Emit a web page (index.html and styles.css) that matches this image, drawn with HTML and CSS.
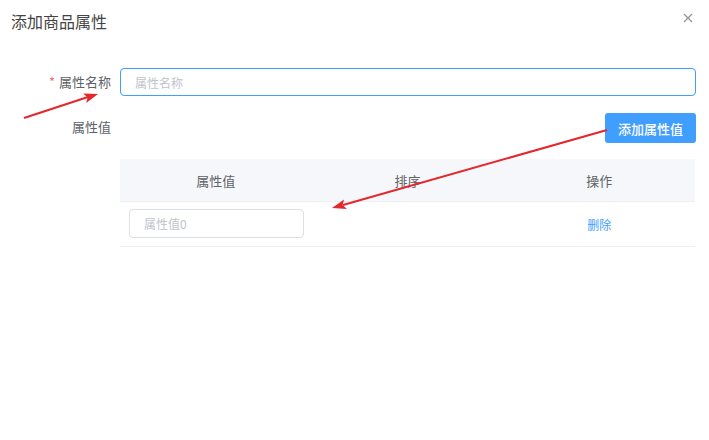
FILE: index.html
```html
<!DOCTYPE html>
<html>
<head>
  <title>添加商品属性</title>
  <link rel="stylesheet" href="styles.css">
</head>
<body>

  <div class="dialog">
    <div class="dialog-header">
      <span class="dialog-title">添加商品属性</span>
      <button class="dialog-close" aria-label="close">
        <svg width="10" height="10" viewBox="0 0 10 10">
          <path d="M1 1 L9 9 M9 1 L1 9" stroke="#909399" stroke-width="1.2" fill="none"/>
        </svg>
      </button>
    </div>

    <div class="dialog-body">
      <div class="form-item">
        <label class="form-label"><span class="required">*</span>属性名称</label>
        <div class="form-content">
          <input class="input focused" type="text" placeholder="属性名称">
        </div>
      </div>

      <div class="form-item">
        <label class="form-label">属性值</label>
        <div class="form-content">
          <div class="toolbar">
            <button class="btn-primary">添加属性值</button>
          </div>

          <div class="table">
            <div class="table-row table-head">
              <div class="cell">属性值</div>
              <div class="cell">排序</div>
              <div class="cell">操作</div>
            </div>
            <div class="table-row">
              <div class="cell cell-left">
                <input class="input small" type="text" placeholder="属性值0">
              </div>
              <div class="cell"></div>
              <div class="cell"><a class="link" href="#">删除</a></div>
            </div>
          </div>
        </div>
      </div>
    </div>
  </div>

  <!-- annotation arrows -->
  <svg class="arrows" width="709" height="440" viewBox="0 0 709 440">
    <line x1="24" y1="118" x2="88" y2="97" stroke="#e5262b" stroke-width="2"/>
    <polygon points="98,94 83.2,93.5 87.6,97.4 86.2,103.1" fill="#e5262b"/>
    <line x1="607" y1="130" x2="343" y2="205" stroke="#e5262b" stroke-width="2"/>
    <polygon points="332,208 346.9,209 342.6,205 344.1,199.4" fill="#e5262b"/>
  </svg>

</body>
</html>
```

FILE: styles.css
```css
body {
  margin: 0;
  background: #fff;
  font-family: "Noto Sans CJK SC", "Noto Sans", sans-serif;
  color: #606266;
}
.dialog {
  width: 709px;
  height: 440px;
  background: #fff;
}
.dialog-header {
  display: flex;
  justify-content: space-between;
  align-items: center;
  padding: 10px 16px 0 11px;
  height: 22px;
}
.dialog-title {
  font-size: 16px;
  line-height: 22px;
  color: #444;
}
.dialog-close {
  border: none;
  background: none;
  padding: 0;
  width: 10px;
  height: 10px;
  margin-top: -6px;
  cursor: pointer;
}
.dialog-close svg {
  display: block;
}
.dialog-body {
  padding: 36px 13px 0 0;
}
.form-item {
  display: flex;
  margin-bottom: 17px;
}
.form-label {
  width: 111px;
  padding-right: 9px;
  text-align: right;
  font-size: 13px;
  line-height: 28px;
  color: #606266;
  flex-shrink: 0;
}
.required {
  color: #f56c6c;
  margin-right: 4px;
}
.form-content {
  flex: 1;
}
.input {
  box-sizing: border-box;
  display: block;
  width: 100%;
  height: 28px;
  padding: 0 14px;
  border: 1px solid #dcdfe6;
  border-radius: 4px;
  font-family: inherit;
  font-size: 12px;
  color: #606266;
  outline: none;
}
.input.focused {
  border-color: #409eff;
}
.input::placeholder {
  color: #c0c4cc;
}
.input.small {
  width: 175px;
  height: 29px;
  margin-top: -1px;
}
.toolbar {
  display: flex;
  justify-content: flex-end;
}
.btn-primary {
  height: 30px;
  width: 91px;
  border: none;
  border-radius: 3px;
  background: #409eff;
  color: #fff;
  font-family: inherit;
  font-size: 13px;
  font-weight: 500;
  cursor: pointer;
}
.table {
  margin-top: 16px;
  width: 575px;
  font-size: 13px;
}
.table-row {
  display: grid;
  grid-template-columns: 1fr 1fr 1fr;
  height: 45px;
  border-bottom: 1px solid #ebeef5;
  box-sizing: border-box;
}
.table-head {
  height: 43px;
  background: #f5f7fa;
  color: #606266;
}
.cell {
  display: flex;
  align-items: center;
  justify-content: center;
}
.cell-left {
  justify-content: flex-start;
  padding-left: 9px;
}
.link {
  color: #409eff;
  text-decoration: none;
  font-size: 12px;
}
.arrows {
  position: absolute;
  top: 0;
  left: 0;
  pointer-events: none;
}
```
